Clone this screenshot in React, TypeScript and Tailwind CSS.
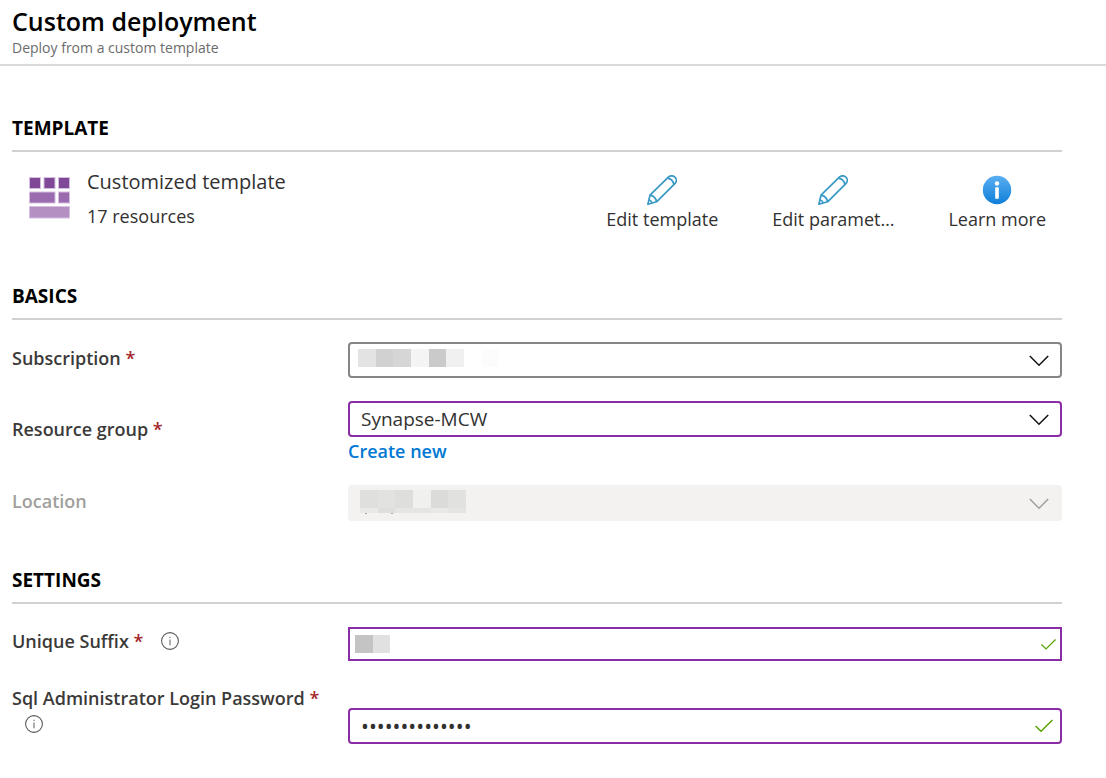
import type { ReactNode } from "react";

function SectionTitle({ children }: { children: ReactNode }) {
  return (
    <h2 className="border-b-2 border-[#d1d1d1] pb-2 text-[19px] leading-7 font-bold text-black">
      {children}
    </h2>
  );
}

function Required() {
  return <span className="text-[#a4262c]">*</span>;
}

function InfoIcon() {
  return (
    <svg width="18" height="18" viewBox="0 0 18 18" fill="none" aria-hidden="true">
      <circle cx="9" cy="9" r="8.4" stroke="#5f5d5b" strokeWidth="1.1" />
      <path d="M9 7.5V13.2M9 4.7V6" stroke="#777" strokeWidth="1.2" />
    </svg>
  );
}

function PencilIcon() {
  return (
    <svg width="30" height="30" viewBox="0 0 30 30" fill="none" stroke="#3999c6" strokeWidth="1.7" strokeLinejoin="round" aria-hidden="true">
      <path d="M0.9 29.2L3 20.2L21.6 1.9C23.2 0.4 26.2 0.4 27.9 2.1C29.7 3.9 29.7 6.6 28.1 8.3L9.6 26.8Z" />
      <path d="M20.5 3.2Q25.8 4.2 26.9 9.5M3 20.2Q8.6 21.2 9.6 26.8M1.9 24.8Q4.4 25.6 5.2 28" />
    </svg>
  );
}

function InfoBadge() {
  return (
    <svg width="30" height="30" viewBox="0 0 30 30" aria-hidden="true">
      <defs>
        <linearGradient id="badge" x1="0" y1="0" x2="0" y2="1">
          <stop offset="0" stopColor="#5aaef2" />
          <stop offset="1" stopColor="#0f7fd8" />
        </linearGradient>
      </defs>
      <circle cx="15" cy="15" r="14.2" fill="url(#badge)" />
      <circle cx="15" cy="8.5" r="2.2" fill="#fff" />
      <rect x="13.2" y="12.2" width="3.6" height="11.6" rx="0.6" fill="#fff" />
    </svg>
  );
}

function TemplateIcon() {
  return (
    <svg width="42" height="42" viewBox="0 0 42 42" strokeWidth="1" stroke="#d5bfe0" aria-hidden="true">
      <g fill="#804998">
        <rect x="0.5" y="0.5" width="11" height="11" />
        <rect x="15" y="0.5" width="11" height="11" />
        <rect x="29.5" y="0.5" width="11" height="11" />
      </g>
      <g fill="#9a6bae">
        <rect x="0.5" y="15" width="25.5" height="11" />
        <rect x="29.5" y="15" width="11" height="11" />
      </g>
      <rect x="0.5" y="29.5" width="40" height="11.5" fill="#b48fc2" />
    </svg>
  );
}

function Chevron({ color }: { color: string }) {
  return (
    <svg className="pointer-events-none absolute top-[13px] right-[13px]" width="20" height="12" viewBox="0 0 20 12" fill="none" stroke={color} strokeWidth="1.5" aria-hidden="true">
      <path d="M0.8 1L10 10.3L19.2 1" />
    </svg>
  );
}

function Check({ size }: { size: number }) {
  return (
    <svg width={size} height={size} viewBox="0 0 18 18" fill="none" stroke="#57a300" strokeWidth="1.5" aria-hidden="true">
      <path d="M0.5 9L6 14.3L17.5 3" />
    </svg>
  );
}

type Block = { x: number; y?: number; h?: number; w?: number; fill: string };

function Redacted({ blocks, className }: { blocks: Block[]; className: string }) {
  return (
    <svg className={className} width="142" height="24" viewBox="0 0 142 24" shapeRendering="crispEdges" aria-hidden="true">
      {blocks.map((b) => (
        <rect key={`${b.x}-${b.y ?? 0}`} x={b.x} y={b.y ?? 0} width={b.w ?? 18} height={b.h ?? 18} fill={b.fill} />
      ))}
    </svg>
  );
}

const subscriptionBlocks: Block[] = [
  { x: 0, fill: "#e3e3e3" },
  { x: 18, w: 17, fill: "#d1d1d1" },
  { x: 35, fill: "#d6d6d6" },
  { x: 53, fill: "#f4f4f4" },
  { x: 71, w: 17, fill: "#cacaca" },
  { x: 88, fill: "#f0f0f0" },
  { x: 124, w: 17, fill: "#fcfcfc" },
];

const locationBlocks: Block[] = [
  { x: 0, fill: "#dfdfde" },
  { x: 18, w: 17, fill: "#e2e2e1" },
  { x: 35, fill: "#dededd" },
  { x: 53, fill: "#f0f0ef" },
  { x: 71, w: 17, fill: "#dbdbda" },
  { x: 88, fill: "#e1e1e0" },
  { x: 0, y: 18, h: 5, fill: "#e9e9e8" },
  { x: 18, y: 18, h: 5, w: 17, fill: "#dededd" },
  { x: 35, y: 18, h: 5, w: 36, fill: "#e5e5e4" },
  { x: 71, y: 18, h: 5, w: 17, fill: "#e9e9e8" },
  { x: 88, y: 18, h: 5, fill: "#e4e4e3" },
  { x: 5, y: 23, h: 1, w: 2, fill: "#a8a8a7" },
  { x: 31, y: 23, h: 1, w: 2, fill: "#a8a8a7" },
];

const suffixBlocks: Block[] = [
  { x: 0, fill: "#c4c4c4" },
  { x: 18, w: 17, fill: "#e1e1e1" },
];

function Row({ label, children }: { label: ReactNode; children: ReactNode }) {
  return (
    <div className="flex items-start">
      <div className="w-[336px] shrink-0 text-lg leading-7 font-semibold text-[#3b3a39]">{label}</div>
      <div className="min-w-0 flex-1">{children}</div>
    </div>
  );
}

function Action({ icon, text }: { icon: ReactNode; text: string }) {
  return (
    <button type="button" className="flex flex-col items-center">
      {icon}
      <span className="text-lg leading-7 whitespace-nowrap">{text}</span>
    </button>
  );
}

export default function App() {
  return (
    <div className="bg-white pb-8 font-['Open_Sans','Noto_Sans',sans-serif] text-[#323130]">
      <header className="border-b-2 border-[#dadada] px-3 pt-1">
        <h1 className="text-[25px] leading-[34px] font-semibold text-black">Custom deployment</h1>
        <p className="pb-1.5 text-sm leading-5 text-[#6b6b6b]">Deploy from a custom template</p>
      </header>

      <main className="pt-12 pr-11 pl-3">
        <section>
          <SectionTitle>TEMPLATE</SectionTitle>
          <div className="flex items-start justify-between px-4 pt-4">
            <div className="flex">
              <div className="pt-[9px] pl-px">
                <TemplateIcon />
              </div>
              <div className="pl-4">
                <p className="text-xl leading-7">Customized template</p>
                <p className="pt-1.5 text-lg leading-7">17 resources</p>
              </div>
            </div>
            <div className="flex gap-[54px] pt-[7px] pb-px">
              <Action icon={<PencilIcon />} text="Edit template" />
              <Action icon={<PencilIcon />} text="Edit paramet…" />
              <Action icon={<InfoBadge />} text="Learn more" />
            </div>
          </div>
        </section>

        <section className="pt-12">
          <SectionTitle>BASICS</SectionTitle>
          <div className="flex flex-col gap-5 pt-[22px]">
            <div className="pb-[3px]">
              <Row label={<label htmlFor="subscription" className="block pt-0.5">Subscription <Required /></label>}>
                <div className="relative">
                  <select id="subscription" className="block h-9 w-full appearance-none rounded-sm border-2 border-[#868686] bg-white" />
                  <Redacted className="pointer-events-none absolute top-[7px] left-[10px]" blocks={subscriptionBlocks} />
                  <Chevron color="#111111" />
                </div>
              </Row>
            </div>
            <Row label={<label htmlFor="group" className="block pt-3.5">Resource group <Required /></label>}>
              <div className="relative">
                <select id="group" className="block h-9 w-full appearance-none rounded-sm border-2 border-[#8a2da5] bg-white px-[11px] text-[19px] leading-7">
                  <option>Synapse-MCW</option>
                </select>
                <Chevron color="#111111" />
              </div>
              <a href="#create" className="block w-fit text-lg leading-7 font-semibold text-[#0078d4]">Create new</a>
            </Row>
            <Row label={<label htmlFor="location" className="block pt-0.5 text-[#a19f9d]">Location</label>}>
              <div className="relative">
                <select id="location" disabled className="block h-9 w-full appearance-none rounded-sm bg-[#f3f2f1]" />
                <Redacted className="pointer-events-none absolute top-[5px] left-3" blocks={locationBlocks} />
                <Chevron color="#a19f9d" />
              </div>
            </Row>
          </div>
        </section>

        <section className="pt-[45px]">
          <SectionTitle>SETTINGS</SectionTitle>
          <div className="flex flex-col gap-[23px] pt-[23px]">
            <Row
              label={
                <div className="flex items-center gap-[18px]">
                  <label htmlFor="suffix">Unique Suffix <Required /></label>
                  <InfoIcon />
                </div>
              }
            >
              <div className="relative">
                <input id="suffix" type="text" className="block h-[34px] w-full border-2 border-[#8a2da5] px-2 text-lg" />
                <Redacted className="pointer-events-none absolute top-2 left-[7px]" blocks={suffixBlocks} />
                <div className="pointer-events-none absolute top-[10px] right-[6px]">
                  <Check size={15} />
                </div>
              </div>
            </Row>
            <Row
              label={
                <div>
                  <label htmlFor="password">Sql Administrator Login Password <Required /></label>
                  <div className="pt-[3px] pl-[13px]">
                    <InfoIcon />
                  </div>
                </div>
              }
            >
              <div className="pt-6">
                <div className="relative">
                  <input id="password" type="password" defaultValue="synapsemcw2020" className="block h-9 w-full rounded-sm border-2 border-[#8a2da5] px-[11px] text-[21px]" />
                  <div className="pointer-events-none absolute top-[9px] right-[9px]">
                    <Check size={18} />
                  </div>
                </div>
              </div>
            </Row>
          </div>
        </section>
      </main>
    </div>
  );
}
